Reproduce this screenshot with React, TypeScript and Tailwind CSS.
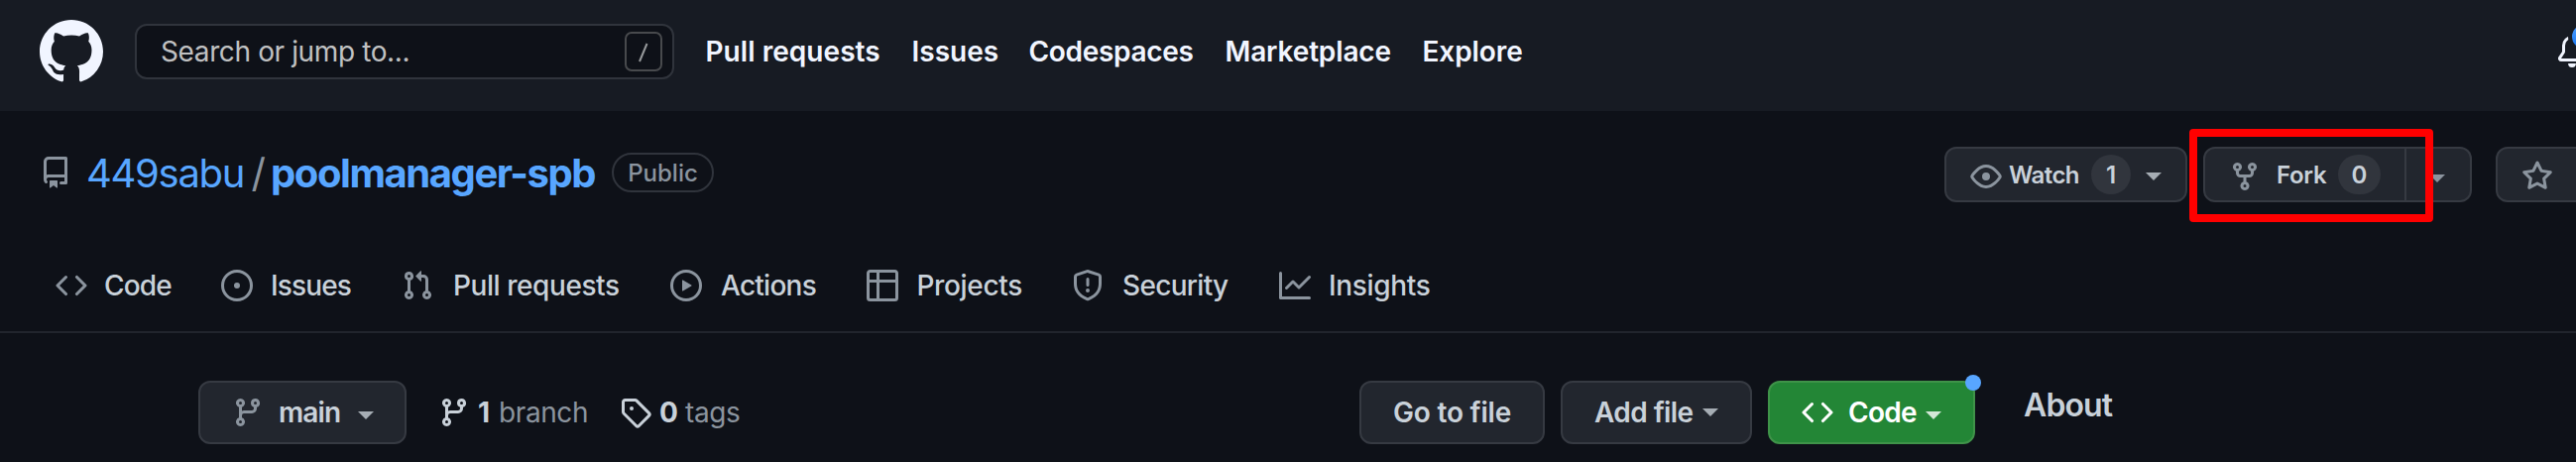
import type { ReactNode } from "react";

const PATHS = {
  mark: "M8 0C3.58 0 0 3.58 0 8c0 3.54 2.29 6.53 5.47 7.59.4.07.55-.17.55-.38 0-.19-.01-.82-.01-1.49-2.01.37-2.53-.49-2.69-.94-.09-.23-.48-.94-.82-1.13-.28-.15-.68-.52-.01-.53.63-.01 1.08.58 1.23.82.72 1.21 1.87.87 2.33.66.07-.52.28-.87.51-1.07-1.78-.2-3.64-.89-3.64-3.95 0-.87.31-1.59.82-2.15-.08-.2-.36-1.02.08-2.12 0 0 .67-.21 2.2.82.64-.18 1.32-.27 2-.27.68 0 1.36.09 2 .27 1.53-1.04 2.2-.82 2.2-.82.44 1.1.16 1.92.08 2.12.51.56.82 1.27.82 2.15 0 3.07-1.87 3.75-3.65 3.95.29.25.54.73.54 1.48 0 1.07-.01 1.93-.01 2.2 0 .21.15.46.55.38A8.013 8.013 0 0016 8c0-4.42-3.58-8-8-8z",
  repo: "M2 2.5A2.5 2.5 0 014.5 0h8.75a.75.75 0 01.75.75v12.5a.75.75 0 01-.75.75h-2.5a.75.75 0 110-1.5h1.75v-2h-8a1 1 0 00-.714 1.7.75.75 0 01-1.072 1.05A2.495 2.495 0 012 11.5v-9zm10.5-1V9h-8c-.356 0-.694.074-1 .208V2.5a1 1 0 011-1h8zM5 12.25v3.25a.25.25 0 00.4.2l1.45-1.087a.25.25 0 01.3 0L8.6 15.7a.25.25 0 00.4-.2v-3.25a.25.25 0 00-.25-.25h-3.5a.25.25 0 00-.25.25z",
  eye: "M1.679 7.932c.412-.621 1.242-1.75 2.366-2.717C5.175 4.242 6.527 3.5 8 3.5c1.473 0 2.824.742 3.955 1.715 1.124.967 1.954 2.096 2.366 2.717a.119.119 0 010 .136c-.412.621-1.242 1.75-2.366 2.717C10.825 11.758 9.473 12.5 8 12.5c-1.473 0-2.824-.742-3.955-1.715C2.92 9.818 2.09 8.69 1.679 8.068a.119.119 0 010-.136zM8 2c-1.981 0-3.67.992-4.933 2.078C1.797 5.169.88 6.423.43 7.1a1.619 1.619 0 000 1.798c.45.678 1.367 1.932 2.637 3.024C4.329 13.008 6.019 14 8 14c1.981 0 3.67-.992 4.933-2.078 1.27-1.091 2.187-2.345 2.637-3.023a1.619 1.619 0 000-1.798c-.45-.678-1.367-1.932-2.637-3.023C11.671 2.992 9.981 2 8 2zm0 8a2 2 0 100-4 2 2 0 000 4z",
  fork: "M5 3.25a.75.75 0 11-1.5 0 .75.75 0 011.5 0zm0 2.122a2.25 2.25 0 10-1.5 0v.878A2.25 2.25 0 005.75 8.5h1.5v2.128a2.251 2.251 0 101.5 0V8.5h1.5a2.25 2.25 0 002.25-2.25v-.878a2.25 2.25 0 10-1.5 0v.878a.75.75 0 01-.75.75h-4.5A.75.75 0 015 6.25v-.878zm3.75 7.378a.75.75 0 11-1.5 0 .75.75 0 011.5 0zm3-8.75a.75.75 0 100-1.5.75.75 0 000 1.5z",
  star: "M8 .25a.75.75 0 01.673.418l1.882 3.815 4.21.612a.75.75 0 01.416 1.279l-3.046 2.97.719 4.192a.75.75 0 01-1.088.791L8 12.347l-3.766 1.98a.75.75 0 01-1.088-.79l.72-4.194L.818 6.374a.75.75 0 01.416-1.28l4.21-.611L7.327.668A.75.75 0 018 .25zm0 2.445L6.615 5.5a.75.75 0 01-.564.41l-3.097.45 2.24 2.184a.75.75 0 01.216.664l-.528 3.084 2.769-1.456a.75.75 0 01.698 0l2.77 1.456-.53-3.084a.75.75 0 01.216-.664l2.24-2.183-3.096-.45a.75.75 0 01-.564-.41L8 2.694v.001z",
  bell: "M8 16a2 2 0 001.985-1.75c.017-.137-.097-.25-.235-.25h-3.5c-.138 0-.252.113-.235.25A2 2 0 008 16zM3 5a5 5 0 0110 0v2.947c0 .05.015.098.042.139l1.703 2.555A1.518 1.518 0 0113.482 13H2.518a1.518 1.518 0 01-1.263-2.36l1.703-2.554A.25.25 0 003 7.947V5zm5-3.5A3.5 3.5 0 004.5 5v2.947c0 .346-.102.683-.294.97l-1.703 2.556a.018.018 0 00-.003.01l.001.006c0 .002.002.004.004.006a.017.017 0 00.006.004l.007.001h10.964l.007-.001a.016.016 0 00.006-.004.016.016 0 00.004-.006l.001-.007a.017.017 0 00-.003-.01l-1.703-2.554a1.75 1.75 0 01-.294-.97V5A3.5 3.5 0 008 1.5z",
  code: "M4.72 3.22a.75.75 0 011.06 1.06L2.06 8l3.72 3.72a.75.75 0 11-1.06 1.06L.47 8.53a.75.75 0 010-1.06l4.25-4.25zm6.56 0a.75.75 0 10-1.06 1.06L13.94 8l-3.72 3.72a.75.75 0 101.06 1.06l4.25-4.25a.75.75 0 000-1.06l-4.25-4.25z",
  issue: "M8 9.5a1.5 1.5 0 100-3 1.5 1.5 0 000 3zM8 0a8 8 0 100 16A8 8 0 008 0zM1.5 8a6.5 6.5 0 1113 0 6.5 6.5 0 01-13 0z",
  pull: "M7.177 3.073L9.573.677A.25.25 0 0110 .854v4.792a.25.25 0 01-.427.177L7.177 3.427a.25.25 0 010-.354zM3.75 2.5a.75.75 0 100 1.5.75.75 0 000-1.5zm-2.25.75a2.25 2.25 0 113 2.122v5.256a2.251 2.251 0 11-1.5 0V5.372A2.25 2.25 0 011.5 3.25zM11 2.5h-1V4h1a1 1 0 011 1v5.628a2.251 2.251 0 101.5 0V5A2.5 2.5 0 0011 2.5zm1 10.25a.75.75 0 111.5 0 .75.75 0 01-1.5 0zM3.75 12a.75.75 0 100 1.5.75.75 0 000-1.5z",
  play: "M1.5 8a6.5 6.5 0 1113 0 6.5 6.5 0 01-13 0zM8 0a8 8 0 100 16A8 8 0 008 0zM6.379 5.227A.25.25 0 006 5.442v5.117a.25.25 0 00.379.214l4.264-2.559a.25.25 0 000-.428L6.379 5.227z",
  table: "M0 1.75C0 .784.784 0 1.75 0h12.5C15.216 0 16 .784 16 1.75v12.5A1.75 1.75 0 0114.25 16H1.75A1.75 1.75 0 010 14.25V1.75zM1.5 6.5v7.75c0 .138.112.25.25.25H5v-8H1.5zM5 5H1.5V1.75a.25.25 0 01.25-.25H5V5zm1.5 1.5v8h7.75a.25.25 0 00.25-.25V6.5h-8zm8-1.5h-8V1.5h7.75a.25.25 0 01.25.25V5z",
  shield: "M7.467.133a1.75 1.75 0 011.066 0l5.25 1.68A1.75 1.75 0 0115 3.48V7c0 1.566-.32 3.182-1.303 4.682-.983 1.498-2.585 2.813-5.032 3.855a1.7 1.7 0 01-1.33 0c-2.447-1.042-4.049-2.357-5.032-3.855C1.32 10.182 1 8.566 1 7V3.48a1.75 1.75 0 011.217-1.667l5.25-1.68zm.61 1.429a.25.25 0 00-.153 0l-5.25 1.68a.25.25 0 00-.174.238V7c0 1.358.275 2.666 1.057 3.86.784 1.194 2.121 2.34 4.366 3.297a.2.2 0 00.154 0c2.245-.956 3.582-2.104 4.366-3.298C13.225 9.666 13.5 8.36 13.5 7V3.48a.25.25 0 00-.174-.237l-5.25-1.68zM9 10.5a1 1 0 11-2 0 1 1 0 012 0zm-.25-5.75a.75.75 0 10-1.5 0v3a.75.75 0 001.5 0v-3z",
  graph: "M1.5 1.75a.75.75 0 00-1.5 0v12.5c0 .414.336.75.75.75h14.5a.75.75 0 000-1.5H1.5V1.75zm14.28 2.53a.75.75 0 00-1.06-1.06L10 7.94 7.53 5.47a.75.75 0 00-1.06 0L3.22 8.72a.75.75 0 001.06 1.06L7 7.06l2.47 2.47a.75.75 0 001.06 0l5.25-5.25z",
  branch: "M11.75 2.5a.75.75 0 100 1.5.75.75 0 000-1.5zm-2.25.75a2.25 2.25 0 113 2.122V6A2.5 2.5 0 0110 8.5H6a1 1 0 00-1 1v1.128a2.251 2.251 0 11-1.5 0V5.372a2.25 2.25 0 111.5 0v1.836A2.492 2.492 0 016 7h4a1 1 0 001-1v-.628A2.25 2.25 0 019.5 3.25zM4.25 12a.75.75 0 100 1.5.75.75 0 000-1.5zM3.5 3.25a.75.75 0 111.5 0 .75.75 0 01-1.5 0z",
  tag: "M2.5 7.775V2.75a.25.25 0 01.25-.25h5.025a.25.25 0 01.177.073l6.25 6.25a.25.25 0 010 .354l-5.025 5.025a.25.25 0 01-.354 0l-6.25-6.25a.25.25 0 01-.073-.177zm-1.5 0V2.75C1 1.784 1.784 1 2.75 1h5.025c.464 0 .91.184 1.238.513l6.25 6.25a1.75 1.75 0 010 2.474l-5.026 5.026a1.75 1.75 0 01-2.474 0l-6.25-6.25A1.75 1.75 0 011 7.775zM6 5a1 1 0 100 2 1 1 0 000-2z",
};

function Icon({ name, className = "size-8 text-[#8b949e]" }: { name: keyof typeof PATHS; className?: string }) {
  return (
    <svg viewBox="0 0 16 16" className={`shrink-0 ${className}`} fill="currentColor">
      <path fillRule="evenodd" d={PATHS[name]} />
    </svg>
  );
}

function Caret({ className = "" }: { className?: string }) {
  return (
    <svg viewBox="0 0 16 8" className={`h-2 w-4 shrink-0 ${className}`} fill="currentColor">
      <path d="M0 0h16L8 8z" />
    </svg>
  );
}

function Button({ className, children }: { className: string; children: ReactNode }) {
  return (
    <button className={`flex shrink-0 items-center rounded-xl border-2 border-[#363a42] bg-[#22262e] text-left text-[#c9d1d9] ${className}`}>
      {children}
    </button>
  );
}

const NAV = [
  { label: "Pull requests", className: "w-52 tracking-[0.05px]" },
  { label: "Issues", className: "w-[118px]" },
  { label: "Codespaces", className: "w-[198px] tracking-[-0.3px]" },
  { label: "Marketplace", className: "w-[199px] tracking-[-0.14px]" },
  { label: "Explore", className: "tracking-[-0.1px]" },
];

const TABS: { label: string; icon: keyof typeof PATHS; className: string }[] = [
  { label: "Code", icon: "code", className: "w-[167px] gap-[17px] tracking-[-0.8px]" },
  { label: "Issues", icon: "issue", className: "w-[182px] gap-[18px] tracking-[-0.85px]" },
  { label: "Pull requests", icon: "pull", className: "w-[271px] gap-5 tracking-[-0.43px]" },
  { label: "Actions", icon: "play", className: "w-[198px] gap-[19px] tracking-[-0.75px]" },
  { label: "Projects", icon: "table", className: "w-[206.5px] gap-[18.5px] tracking-[-0.35px]" },
  { label: "Security", icon: "shield", className: "w-[209.5px] gap-[19.5px] tracking-[-0.68px]" },
  { label: "Insights", icon: "graph", className: "gap-[18px] tracking-[-0.35px]" },
];

function Header() {
  return (
    <header className="flex h-28 items-center bg-[#171b23] pb-2 pl-10">
      <Icon name="mark" className="size-16 text-[#f1f5ff]" />
      <div className="ml-8 flex h-14 w-[544px] items-center justify-between rounded-xl border-2 border-[#30343c] bg-[#0e1118] pr-2.5 pl-6">
        <span className="text-[28px] tracking-[-0.38px] text-[#c0c1c2]">Search or jump to...</span>
        <svg viewBox="0 0 38 40" className="h-10 w-[38px]" fill="none" strokeWidth="2">
          <rect x="1" y="1" width="36" height="38" rx="6" stroke="#484a4d" />
          <path d="M15 30L22.5 12" stroke="#979a9c" />
        </svg>
      </div>
      <nav className="ml-[31.5px] flex text-[28px] font-semibold text-[#f1f5ff]">
        {NAV.map((n) => (
          <a key={n.label} className={`whitespace-nowrap ${n.className}`}>
            {n.label}
          </a>
        ))}
      </nav>
      <div className="relative mr-[-12px] ml-auto shrink-0">
        <Icon name="bell" className="size-8 text-[#f1f5ff]" />
        <span className="absolute top-[-15px] left-3 size-8 rounded-full border-4 border-[#171b23] bg-linear-to-b from-[#54a3ff] to-[#006eed] bg-origin-border" />
      </div>
    </header>
  );
}

function RepoHeading() {
  return (
    <div className="flex h-[130px] items-start pt-9 pl-10">
      <div className="flex h-14 w-[1921px] shrink-0 items-center pb-1">
        <Icon name="repo" />
        <div className="ml-[15px] flex pt-0.5 text-[40px] whitespace-nowrap text-[#58a6ff]">
          <span className="w-[166.5px] tracking-[-1.3px]">449sabu</span>
          <span className="w-[19.5px] text-[#8b949e]">/</span>
          <span className="w-[344px] font-[650] tracking-[-1.42px]">poolmanager-spb</span>
        </div>
        <span className="flex h-10 w-[103px] items-center justify-center rounded-full border-2 border-[#30343c] pt-px text-2xl font-medium text-[#8b949e]">
          Public
        </span>
      </div>
      <Button className="h-14 w-[245px] pl-6 text-2xl font-semibold">
        <Icon name="eye" className="mt-1 size-8 text-[#8b949e]" />
        <span className="ml-[7px] w-[83px] pt-0.5 tracking-[-0.6px]">Watch</span>
        <span className="flex h-10 w-10 items-center justify-center rounded-full bg-[#31353d] pt-0.5">1</span>
        <Caret className="mt-1 ml-[15px] text-[#a6adb4]" />
      </Button>
      <div className="relative ml-4 flex">
        <Button className="h-14 w-[205px] rounded-r-none pl-6 text-2xl font-semibold">
          <Icon name="fork" className="mt-1 size-8 text-[#8b949e]" />
          <span className="ml-4 w-[62px] pt-0.5 tracking-[-0.3px]">Fork</span>
          <span className="flex h-10 w-[43px] items-center justify-center rounded-full bg-[#31353d] pt-0.5">0</span>
        </Button>
        <Button className="h-14 w-[66px] rounded-l-none border-l-0 pl-[23px]">
          <Caret className="mt-2 text-[#8b949e]" />
        </Button>
        <div className="absolute top-[-18px] left-[-14px] h-[94px] w-[246px] rounded-[4px] border-8 border-[#ff0000]" />
      </div>
      <Button className="ml-6 h-14 w-[200px] pl-6">
        <Icon name="star" className="mt-1 size-8 text-[#8b949e]" />
      </Button>
    </div>
  );
}

function Tabs() {
  return (
    <nav className="flex h-[94px] items-center border-b-2 border-[#21252d] pl-14 text-[28px] font-[450] text-[#c9d1d9]">
      {TABS.map((t) => (
        <a key={t.label} className={`flex items-center whitespace-nowrap ${t.className}`}>
          <Icon name={t.icon} />
          {t.label}
        </a>
      ))}
    </nav>
  );
}

function FileBar() {
  return (
    <div className="flex items-start pt-12 pl-[200px] text-[28px] whitespace-nowrap">
      <div className="flex h-16 w-[1171px] shrink-0 items-center text-[#8b949e]">
        <Button className="h-16 w-[210px] pl-8 font-semibold">
          <Icon name="branch" />
          <span className="ml-[15px] w-[80px] tracking-[-0.87px]">main</span>
          <Caret className="mt-1.5 text-[#a6adb4]" />
        </Button>
        <Icon name="branch" className="ml-8 size-8 text-[#c9d1d9]" />
        <b className="ml-2 w-[21px] font-bold text-[#c9d1d9]">1</b>
        <span className="w-[122px] tracking-[-0.4px]">branch</span>
        <Icon name="tag" className="size-8 text-[#c9d1d9]" />
        <b className="ml-2 w-[26px] font-bold text-[#c9d1d9]">0</b>
        <span className="tracking-[-0.4px]">tags</span>
      </div>
      <Button className="h-16 w-[187px] pl-8 font-semibold tracking-[-0.2px]">Go to file</Button>
      <Button className="ml-4 h-16 w-[193px] pl-8 font-semibold">
        <span className="w-[109px] tracking-[-0.58px]">Add file</span>
        <Caret className="text-[#a6adb4]" />
      </Button>
      <div className="relative ml-4">
        <button className="flex h-16 w-[209px] items-center rounded-xl border-2 border-[#3f9349] bg-[#238636] pl-8 text-left text-white">
          <Icon name="code" className="size-8" />
          <span className="ml-[15px] w-[78px] font-semibold tracking-[-0.72px]">Code</span>
          <Caret className="mt-1.5 text-[#d3e7d7]" />
        </button>
        <span className="absolute top-[-6px] right-[-6px] size-4 rounded-full bg-[#58a6ff]" />
      </div>
      <h2 className="ml-[49px] text-[32px] leading-[50px] font-semibold tracking-[-0.9px] text-[#c9d1d9]">About</h2>
    </div>
  );
}

export default function App() {
  return (
    <div className="h-[466px] w-[2598px] overflow-hidden bg-[#0e1118] font-['Inter',sans-serif] leading-none">
      <Header />
      <RepoHeading />
      <Tabs />
      <FileBar />
    </div>
  );
}
